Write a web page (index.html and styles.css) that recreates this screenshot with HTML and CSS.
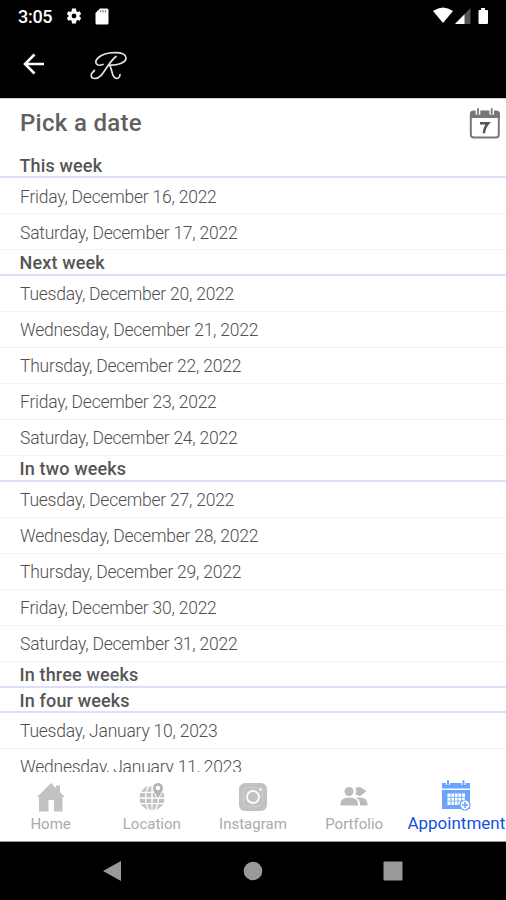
FILE: index.html
```html
<!DOCTYPE html>
<html lang="en">
<head>
<meta charset="utf-8">
<title>Pick a date</title>
<link rel="stylesheet" href="styles.css">
</head>
<body>
<div class="phone">
  <header class="status">
    <span class="clock">3:05</span>
    <svg class="gear" width="18" height="18" viewBox="0 0 24 24"><path fill="#fff" fill-rule="evenodd" d="M19.4 13a7.500 7.500 0 0 0 0-2l2.200-1.700-2.100-3.700-2.700 1a7.500 7.500 0 0 0-1.700-1L14.700 2H9.300l-.4 3.600a7.500 7.500 0 0 0-1.700 1l-2.700-1-2.100 3.700L4.600 11a7.500 7.500 0 0 0 0 2l-2.200 1.700 2.100 3.700 2.700-1a7.500 7.500 0 0 0 1.700 1l.4 3.600h5.400l.4-3.600a7.500 7.500 0 0 0 1.700-1l2.700 1 2.100-3.700zM12 15.200a3.200 3.200 0 1 1 0-6.400 3.200 3.200 0 0 1 0 6.400z"/></svg>
    <svg class="sd" width="14" height="17" viewBox="0 0 14 17"><path fill="#fff" d="M5 .5h7q1.500 0 1.500 1.500v13q0 1.500-1.500 1.500H2Q.5 16.500.5 15V5z"/><path stroke="#888" stroke-width="1.200" d="M5.500 2v2.500M8 2v2.500M10.500 2v2.500"/></svg>
    <svg class="signals" width="58" height="18" viewBox="0 0 58 18"><path fill="#fff" d="M0 4Q10-3 20 4L10 16z"/><path fill="#555" d="M22 17 37.500 1v16z"/><path fill="#fff" d="M22 17 31.500 7.200V17z"/><path fill="#fff" d="M48 1h4v2h2q1 0 1 1v12q0 1-1 1h-7.500q-1 0-1-1V4q0-1 1-1H48z"/></svg>
  </header>
  <div class="appbar">
    <svg class="back" width="22" height="22" viewBox="0 0 22 22"><path fill="none" stroke="#fff" stroke-width="2.600" d="M11.500 1.500 2 11l9.500 9.500M2 11h19"/></svg>
    <svg class="logo" width="38" height="32" viewBox="0 0 38 32"><path fill="none" stroke="#e2e2e2" stroke-width="1.700" stroke-linecap="round" d="M4.500 20.500C0 24 0 28.500 5 28.500c8 0 11-14 21-22M13 14.500C6 17 3.500 12 8.500 7.500 15 1.500 35 .5 36 7.500c.5 5.500-9 8-17 7.500M19 15c3.500 2 2 13 7.500 13.500 2 0 3.500-2 3.500-4"/></svg>
  </div>
  <main class="content">
    <div class="title"><h1>Pick a date</h1>
      <svg class="calendar" width="32" height="33" viewBox="0 0 32 33"><rect x="1.800" y="4.500" width="28" height="26" rx="3" fill="#fff" stroke="#777" stroke-width="2"/><path fill="#777" d="M1 11V7q0-3 3-3h24q3 0 3 3v4z"/><path stroke="#fff" stroke-width="4.600" d="M9 2v5.500M22.700 2v5.500"/><path stroke="#777" stroke-width="1.800" stroke-linecap="round" d="M9 2v4.500M22.700 2v4.500"/><path fill="none" stroke="#555" stroke-width="2.500" d="M11 16.200h8.200q-4 4.500-4.300 10"/></svg>
    </div>
    <h2 class="first">This week</h2>
    <p>Friday, December 16, 2022</p>
    <p>Saturday, December 17, 2022</p>
    <h2>Next week</h2>
    <p>Tuesday, December 20, 2022</p>
    <p>Wednesday, December 21, 2022</p>
    <p>Thursday, December 22, 2022</p>
    <p>Friday, December 23, 2022</p>
    <p>Saturday, December 24, 2022</p>
    <h2>In two weeks</h2>
    <p>Tuesday, December 27, 2022</p>
    <p>Wednesday, December 28, 2022</p>
    <p>Thursday, December 29, 2022</p>
    <p>Friday, December 30, 2022</p>
    <p>Saturday, December 31, 2022</p>
    <h2>In three weeks</h2>
    <h2 class="compact">In four weeks</h2>
    <p>Tuesday, January 10, 2023</p>
    <p>Wednesday, January 11, 2023</p>
  </main>
  <nav class="tabs">
    <a class="tab"><svg width="32" height="32" viewBox="0 0 32 32"><path fill="#c2c2c2" d="M2 16 16 2l5 5V4.500h4V11l5 5h-2.500v14.500H19V19h-5.500v11.500H4V16z"/></svg><span>Home</span></a>
    <a class="tab"><svg width="32" height="32" viewBox="0 0 32 32"><circle cx="16" cy="17" r="12.500" fill="#c2c2c2"/><g fill="none" stroke="#fff" stroke-width="1.300"><ellipse cx="16" cy="17" rx="6.500" ry="13"/><path d="M3 17h26M5 11.300h22M5 22.700h22M16 4v26"/></g><path fill="#b5b5b5" stroke="#fff" d="M22 18c-2-4-5.500-7-5.500-11a5.500 5.500 0 0 1 11 0c0 4-3.500 7-5.500 11z"/><circle cx="22" cy="7" r="2.200" fill="#fff"/></svg><span>Location</span></a>
    <a class="tab"><svg width="32" height="32" viewBox="0 0 32 32"><rect x="2" y="2" width="28" height="28" rx="6" fill="#c2c2c2"/><rect x="6.500" y="6.500" width="19" height="19" rx="5" fill="none" stroke="#cecece"/><circle cx="16" cy="16" r="6" fill="none" stroke="#fff" stroke-width="1.800"/><circle cx="23.500" cy="8.500" r="1.300" fill="#fff"/></svg><span>Instagram</span></a>
    <a class="tab"><svg width="32" height="32" viewBox="0 0 32 32"><g fill="#bbb"><circle cx="11" cy="10.500" r="4.500"/><path d="M2.500 24.500v-2q0-5.500 8.500-6 9 .5 9 6v2zM18 16.700q11-1.500 11.500 5.800v2H22v-2q0-3.500-4-5.800z"/><path d="M17.500 7.500q2-2 5-1.200l6 3.700-5.500 4.500q-3 .8-5.500-1.200 1.700-3 0-5.800z"/></g></svg><span>Portfolio</span></a>
    <a class="tab active"><svg width="32" height="32" viewBox="0 0 32 32"><path fill="#69a5fb" d="M2 3h28v5.500H2zM2 10h28v19H2z"/><path stroke="#fff" stroke-width="4" d="M8 0v5M23.500 0v5"/><path stroke="#69a5fb" stroke-width="2" stroke-linecap="round" d="M8 1v3.500M23.500 1v3.500"/><path fill="#fff" d="M7.500 13.500H25V25H7.500z"/><path stroke="#81b2fb" d="M7.500 17.300H25M7.500 21.100H25M11 13.500V25M14.500 13.500V25M18 13.500V25M21.500 13.500V25"/><circle cx="25" cy="25" r="5" fill="#fff" stroke="#69a5fb" stroke-width="1.200"/><path stroke="#69a5fb" stroke-width="1.600" d="M22 25h6M25 22v6"/></svg><span>Appointment</span></a>
  </nav>
  <footer class="system">
    <svg width="20" height="22" viewBox="0 0 20 22"><path fill="#999" d="M19 1v20L1 11z"/></svg>
    <svg width="20" height="20" viewBox="0 0 20 20"><circle cx="10" cy="10" r="9.300" fill="#999"/></svg>
    <svg width="20" height="20" viewBox="0 0 20 20"><rect x=".5" y=".5" width="19" height="19" rx="1" fill="#999"/></svg>
  </footer>
</div>
</body>
</html>
```
FILE: styles.css
```css
* { box-sizing: border-box; }
body, h1, h2, p { margin: 0; }
body { background: #000; font-family: Roboto, "Liberation Sans", sans-serif; }
svg { display: block; flex: none; }
.phone { width: 506px; height: 900px; display: flex; flex-direction: column; overflow: hidden; }
.status { height: 32px; display: flex; align-items: center; padding: 0 15px 0 18px; color: #fff; }
.clock { width: 47px; font-size: 18px; font-weight: 500; letter-spacing: -.3px; }
.sd { margin-left: 12px; }
.signals { margin-left: auto; }
.appbar { height: 66px; display: flex; align-items: center; padding: 0 0 2px 23px; }
.logo { margin: 3px 0 0 45px; }
.content { height: 674px; background: #fff; border-top: 1px solid #ccc; overflow: hidden; }
.title { height: 53px; display: flex; justify-content: space-between; padding: 7px 5px 0 20px; }
.calendar { margin-top: 1px; }
h1 { color: #606060; font-size: 24px; line-height: 35px; font-weight: 500; letter-spacing: .3px; }
h2 { height: 26px; padding-left: 19.500px; border-bottom: 2px solid #dcdefb; color: #555; font-size: 18px; font-weight: 500; line-height: 25px; letter-spacing: .15px; }
h2.first { line-height: 27px; }
h2.compact { height: 25px; }
p { height: 36px; padding-left: 20px; border-bottom: 1px solid #f3f3f3; color: #505050; font-size: 17.500px; font-weight: 300; line-height: 37px; letter-spacing: -.23px; white-space: nowrap; }
h2.first + p, h2.first + p + p { line-height: 38px; }
.tabs { height: 70px; display: flex; background: #fff; border-bottom: 1px solid #999; }
.tab { width: 101.200px; display: flex; flex-direction: column; align-items: center; padding-top: 9px; color: #aaa; font-size: 15px; line-height: 20px; white-space: nowrap; }
.tab span { margin-top: 1px; }
.tab.active { color: #1152e0; font-size: 17px; padding: 8px 0 0 2px; }
.system { height: 58px; display: flex; align-items: center; justify-content: space-between; padding: 0 103px 0 102px; }
```
